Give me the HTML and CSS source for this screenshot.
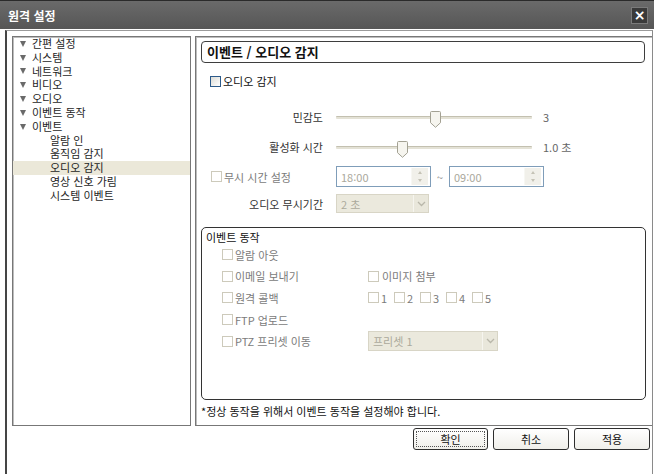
FILE: index.html
```html
<!DOCTYPE html>
<html lang="ko">
<head>
<meta charset="utf-8">
<title>원격 설정</title>
<link rel="stylesheet" href="styles.css">
</head>
<body>
<div class="window">
  <div class="titlebar">
    <span class="title">원격 설정</span>
    <span class="close">×</span>
  </div>
  <div class="frame">
    <div class="panels">
      <ul class="tree">
        <li class="node"><span class="tri"></span>간편 설정</li>
        <li class="node"><span class="tri"></span>시스템</li>
        <li class="node"><span class="tri"></span>네트워크</li>
        <li class="node"><span class="tri"></span>비디오</li>
        <li class="node"><span class="tri"></span>오디오</li>
        <li class="node"><span class="tri"></span>이벤트 동작</li>
        <li class="node"><span class="tri"></span>이벤트</li>
        <li class="leaf">알람 인</li>
        <li class="leaf">움직임 감지</li>
        <li class="leaf selected">오디오 감지</li>
        <li class="leaf">영상 신호 가림</li>
        <li class="leaf">시스템 이벤트</li>
      </ul>
      <div class="content">
        <div class="heading">이벤트 / 오디오 감지</div>
        <div class="audio-row"><span class="cb on"></span><span>오디오 감지</span></div>
        <div class="form">
          <div class="lbl slider-lbl">민감도</div>
          <div class="ctl slider-ctl">
            <div class="slider"><div class="track"></div><span class="thumb" style="left:94px"><svg width="11" height="17" viewBox="0 0 11 17"><path d="M1.5 0.5h8a1 1 0 0 1 1 1v10.2l-5 4.6l-5-4.6v-10.2a1 1 0 0 1 1-1z" fill="#f6f5ef" stroke="#a3a193"/></svg></span></div>
            <span class="val">3</span>
          </div>
          <div class="lbl slider-lbl">활성화 시간</div>
          <div class="ctl slider-ctl">
            <div class="slider"><div class="track"></div><span class="thumb" style="left:61px"><svg width="11" height="17" viewBox="0 0 11 17"><path d="M1.5 0.5h8a1 1 0 0 1 1 1v10.2l-5 4.6l-5-4.6v-10.2a1 1 0 0 1 1-1z" fill="#f6f5ef" stroke="#a3a193"/></svg></span></div>
            <span class="val">1.0 초</span>
          </div>
          <div class="lbl ignore-lbl"><span class="cb"></span><span class="dis">무시 시간 설정</span></div>
          <div class="ctl time-ctl">
            <div class="spin"><span class="spin-text">18:00</span><span class="spin-btns"><span class="sb up"></span><span class="sb down"></span></span></div>
            <span class="tilde">~</span>
            <div class="spin"><span class="spin-text">09:00</span><span class="spin-btns"><span class="sb up"></span><span class="sb down"></span></span></div>
          </div>
          <div class="lbl select-lbl">오디오 무시기간</div>
          <div class="ctl select-ctl">
            <div class="select sel-short"><span class="sel-text">2 초</span><span class="sel-btn"><svg width="9" height="6" viewBox="0 0 9 6"><path d="M1 1l3.5 3.5L8 1" fill="none" stroke="#b9b7aa" stroke-width="1.3"/></svg></span></div>
          </div>
        </div>
        <div class="events">
          <div class="ev-title">이벤트 동작</div>
          <div class="ev-row"><div class="ev-c1"><span class="cb"></span><span class="dis">알람 아웃</span></div></div>
          <div class="ev-row"><div class="ev-c1"><span class="cb"></span><span class="dis">이메일 보내기</span></div><div class="ev-c2"><span class="cb"></span><span class="dis">이미지 첨부</span></div></div>
          <div class="ev-row"><div class="ev-c1"><span class="cb"></span><span class="dis">원격 콜백</span></div><div class="ev-c2 nums"><span class="num"><span class="cb"></span><span class="dis">1</span></span><span class="num"><span class="cb"></span><span class="dis">2</span></span><span class="num"><span class="cb"></span><span class="dis">3</span></span><span class="num"><span class="cb"></span><span class="dis">4</span></span><span class="num"><span class="cb"></span><span class="dis">5</span></span></div></div>
          <div class="ev-row"><div class="ev-c1"><span class="cb"></span><span class="dis">FTP 업로드</span></div></div>
          <div class="ev-row"><div class="ev-c1"><span class="cb"></span><span class="dis">PTZ 프리셋 이동</span></div><div class="ev-c2"><div class="select sel-long"><span class="sel-text">프리셋 1</span><span class="sel-btn"><svg width="9" height="6" viewBox="0 0 9 6"><path d="M1 1l3.5 3.5L8 1" fill="none" stroke="#b9b7aa" stroke-width="1.3"/></svg></span></div></div></div>
        </div>
        <p class="note">*정상 동작을 위해서 이벤트 동작을 설정해야 합니다.</p>
      </div>
    </div>
    <div class="buttons">
      <button class="btn default"><span class="focus">확인</span></button>
      <button class="btn">취소</button>
      <button class="btn">적용</button>
    </div>
  </div>
</div>
</body>
</html>
```

FILE: styles.css
```css
* { box-sizing: border-box; }
html, body { margin: 0; padding: 0; background: #fff; }
body {
  font-family: "Noto Sans CJK KR", "Noto Sans", sans-serif;
  font-size: 11px;
  color: #1e1e1e;
}
.window { width: 654px; height: 474px; overflow: hidden; display: flex; flex-direction: column; }

.titlebar {
  height: 29px;
  flex: none;
  display: flex;
  align-items: center;
  justify-content: space-between;
  padding: 0 6px 0 8px;
  background: linear-gradient(#6a6a6a, #565656);
  border-top: 1px solid #2a2a2a;
}
.title { color: #fff; font-weight: bold; font-size: 12px; }
.close {
  width: 17px; height: 17px;
  display: flex; align-items: center; justify-content: center;
  background: #3a3a3a;
  border: 1px solid #7a7a7a;
  color: #fff; font-weight: bold; font-size: 14px; line-height: 1;
  font-family: "DejaVu Sans", sans-serif;
}

.frame {
  flex: 1;
  margin: 1px 0 0 5px;
  width: 648px;
  border-left: 2px solid #454545;
  border-right: 1px solid #8a8a8a;
  border-top: 1px solid #9a9a9a;
  padding: 5px 0 0 5px;
  display: flex;
  flex-direction: column;
}
.panels { display: flex; gap: 4px; height: 390px; }

.tree {
  list-style: none; margin: 0; padding: 0;
  width: 179px;
  border: 1px solid #777;
  box-shadow: inset 1px 1px 0 #bdbdbd;
}
.tree li { height: 13.8px; line-height: 13.8px; white-space: nowrap; display: flex; align-items: center; }
.tree .node { padding-left: 7px; }
.tree .leaf { padding-left: 37px; }
.tree .selected { background: #ebe8d9; }
.tri {
  width: 0; height: 0;
  border-left: 3.5px solid transparent;
  border-right: 3.5px solid transparent;
  border-top: 6px solid #6a6a6a;
  margin-right: 6px;
}

.content {
  flex: 1;
  border: 1px solid #777;
  border-right: 0;
  box-shadow: inset 1px 1px 0 #bdbdbd;
  padding: 4px 6px 0 5px;
  display: flex;
  flex-direction: column;
}
.heading {
  height: 22px;
  border: 1px solid #3e3e3e;
  border-radius: 4px;
  padding-left: 5px;
  font-weight: bold;
  font-size: 13px;
  line-height: 20px;
  color: #111;
  margin-right: 1px;
}

.cb {
  display: inline-block;
  width: 11px; height: 11px;
  border: 1px solid #cdcabb;
  background: #fff;
  flex: none;
}
.cb.on { border-color: #2c5a8a; background: linear-gradient(135deg, #dcdcd6, #fff); }
.dis { color: #7b7b7b; }

.audio-row { display: flex; align-items: center; gap: 2px; height: 16px; margin: 10px 0 0 9px; color: #111; }

.form {
  display: grid;
  grid-template-columns: 122px 1fr;
  column-gap: 13px;
  margin-top: 18px;
}
.lbl { display: flex; align-items: center; justify-content: flex-end; color: #333; }
.ctl { display: flex; align-items: center; }

.slider-lbl, .slider-ctl { height: 20px; margin-bottom: 10px; }
.slider { position: relative; width: 196px; height: 20px; }
.track {
  position: absolute; left: 0; right: 0; top: 9px; height: 3px;
  background: #e4e2d6;
  border-top: 1px solid #c3c0b0;
  border-radius: 1px;
}
.thumb { position: absolute; top: 4px; width: 11px; height: 17px; display: block; }
.thumb svg { display: block; }
.val { margin-left: 11px; color: #666; }

.ignore-lbl { justify-content: flex-start; padding-left: 10px; gap: 2px; height: 21px; margin-top: -1px; }
.time-ctl { height: 21px; margin-top: -1px; }
.spin {
  width: 95px; height: 21px;
  border: 1px solid #7f9db9;
  display: flex; align-items: center; justify-content: space-between;
  padding: 0 2px 0 4px;
}
.spin + .tilde + .spin { width: 95px; }
.spin-text { color: #aaa89c; }
.spin-btns { display: flex; flex-direction: column; width: 17px; height: 17px; background: #f1f0ea; border-left: 1px solid #f7f7f3; }
.sb { flex: 1; display: flex; align-items: center; justify-content: center; }
.sb::before { content: ""; width: 0; height: 0; border-left: 2.5px solid transparent; border-right: 2.5px solid transparent; }
.sb.up::before { border-bottom: 3px solid #c5c3b6; }
.sb.down::before { border-top: 3px solid #c5c3b6; }
.tilde { width: 18px; text-align: center; color: #888; }

.select-lbl, .select-ctl { height: 19px; margin-top: 7px; }
.select {
  height: 19px;
  background: #ebe9dd;
  border: 1px solid #d8d5c6;
  display: flex; align-items: center; justify-content: space-between;
  padding-left: 4px;
}
.sel-short { width: 93px; }
.sel-long { width: 130px; height: 20px; }
.sel-text { color: #aba99c; }
.sel-btn {
  width: 15px; align-self: stretch;
  display: flex; align-items: center; justify-content: center;
  border-left: 1px solid #f6f5ef;
  background: #e9e7db;
}
.sel-btn svg { display: block; }

.events {
  margin-top: 14px;
  height: 173px;
  border: 1px solid #333;
  border-radius: 5px;
  padding: 1px 0 0 20px;
}
.ev-title { height: 14px; line-height: 14px; margin: 1px 0 0 -16px; color: #111; }
.ev-row { height: 21.6px; display: flex; align-items: center; }
.ev-c1 { width: 146px; display: flex; align-items: center; gap: 2px; }
.ev-c2 { display: flex; align-items: center; gap: 3px; }
.nums { gap: 0; }
.num { display: flex; align-items: center; gap: 2px; width: 26px; }

.note { margin: 0; height: 16px; line-height: 16px; margin-top: 3px; padding-left: 0; color: #111; }

.buttons { display: flex; justify-content: flex-end; gap: 5px; margin-top: 2px; padding-right: 2px; }
.btn {
  width: 76px; height: 22px;
  border: 1px solid #2e2e2e;
  border-radius: 3px;
  background: linear-gradient(#ffffff, #f0efea);
  font: inherit; font-size: 11px; color: #111;
  padding: 2px;
  display: flex; align-items: stretch; justify-content: center;
}
.btn.default { width: 75px; }
.btn:not(.default) { align-items: center; }
.focus { flex: 1; border: 1px dotted #555; display: flex; align-items: center; justify-content: center; }
```
